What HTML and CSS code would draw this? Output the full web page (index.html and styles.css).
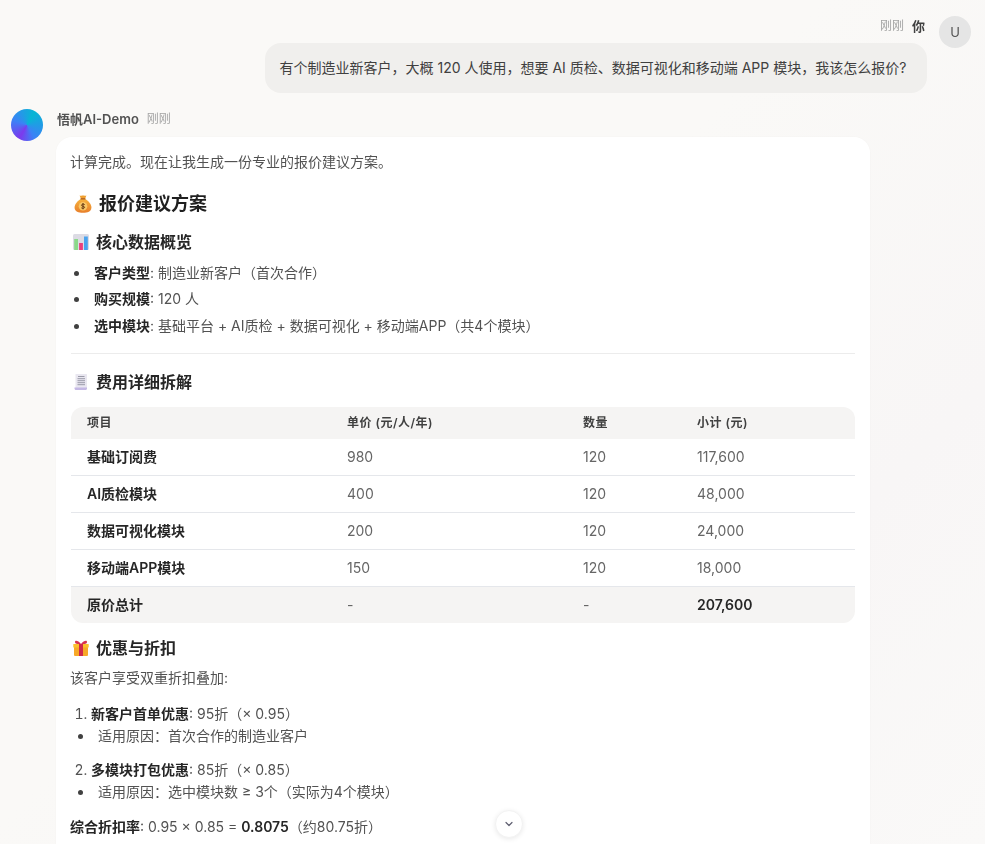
FILE: index.html
```html
<!DOCTYPE html>
<html lang="zh-CN">
<head>
<meta charset="utf-8">
<title>悟帆AI-Demo</title>
<link rel="stylesheet" href="styles.css">
</head>
<body>
<main class="chat">
  <section class="user-row">
    <div class="user-col">
      <div class="user-meta"><span class="time">刚刚</span><span class="you">你</span></div>
      <div class="bubble">有个制造业新客户，大概 120 人使用，想要 AI 质检、数据可视化和移动端 APP 模块，我该怎么报价?</div>
    </div>
    <div class="avatar-u">U</div>
  </section>
  <section class="bot-row">
    <div class="avatar-b"></div>
    <div class="bot-col">
      <div class="bot-meta"><span class="bot-name">悟帆AI-Demo</span><span class="time">刚刚</span></div>
      <article class="card">
        <p class="intro">计算完成。现在让我生成一份专业的报价建议方案。</p>
        <h2 class="h2">
          <svg class="emoji-lg" viewBox="0 0 18 18"><defs><linearGradient id="bag" x1="0" y1="0" x2="0" y2="1"><stop offset="0" stop-color="#f6b23e"/><stop offset="1" stop-color="#e87f2a"/></linearGradient></defs><path d="M5.6 .4 C7 1.2 8 .6 9 .6 C10 .6 11 1.2 12.4 .4 L11 4 H7Z" fill="#f0a030"/><path d="M7 4 H11 C15 6 17.4 9.500 17.400 12.500 C17.400 16.500 13.500 17.800 9 17.800 C4.500 17.800 .6 16.500 .6 12.500 C.6 9.500 3 6 7 4Z" fill="url(#bag)"/><rect x="6.400" y="3.200" width="5.200" height="1.400" rx=".7" fill="#a9581c"/><circle cx="9" cy="11.200" r="4.300" fill="#f8c766"/><path d="M10.700 9.600 C10 8.800 7.500 8.900 7.500 10.300 C7.500 11.700 10.600 10.800 10.600 12.300 C10.600 13.500 8.100 13.600 7.300 12.800 M9 8 V14.400" fill="none" stroke="#5e3210" stroke-width=".9"/></svg>
          报价建议方案
        </h2>
        <h3 class="h3 h3-first">
          <svg class="emoji" viewBox="0 0 16 16"><rect x="0" y="0" width="16" height="16" rx="1.500" fill="#dcdbe4"/><rect x="1.200" y="5" width="3.800" height="11" fill="#8bd98a"/><rect x="6.100" y="9" width="3.800" height="7" fill="#ec3f7c"/><rect x="11" y="2.500" width="3.800" height="13.500" fill="#4aa3ee"/></svg>
          核心数据概览
        </h3>
        <ul class="facts">
          <li><strong>客户类型</strong>: 制造业新客户（首次合作）</li>
          <li><strong>购买规模</strong>: 120 人</li>
          <li><strong>选中模块</strong>: 基础平台 + AI质检 + 数据可视化 + 移动端APP（共4个模块）</li>
        </ul>
        <hr class="rule">
        <h3 class="h3">
          <svg class="emoji" viewBox="0 0 16 16"><rect x="2.500" y="0" width="11.500" height="14.500" rx=".6" fill="#e9e7f0"/><path d="M1.500 13.500 H14 V14.500 C14 15.400 13.400 16 12.500 16 H3 C2.100 16 1.500 15.400 1.500 14.500Z" fill="#c4b8e4"/><path d="M5 2.500 H11.500 M4.500 4.700 H12 M4.500 6.700 H12 M4.500 8.700 H12 M4.500 10.700 H12" stroke="#9b9ba9" stroke-width="1"/></svg>
          费用详细拆解
        </h3>
        <table class="fees">
          <colgroup><col class="c1"><col class="c2"><col class="c3"><col class="c4"></colgroup>
          <thead><tr><th>项目</th><th>单价 (元/人/年)</th><th>数量</th><th>小计 (元)</th></tr></thead>
          <tbody>
            <tr><td><strong>基础订阅费</strong></td><td>980</td><td>120</td><td>117,600</td></tr>
            <tr><td><strong>AI质检模块</strong></td><td>400</td><td>120</td><td>48,000</td></tr>
            <tr><td><strong>数据可视化模块</strong></td><td>200</td><td>120</td><td>24,000</td></tr>
            <tr><td><strong>移动端APP模块</strong></td><td>150</td><td>120</td><td>18,000</td></tr>
            <tr class="total"><td><strong>原价总计</strong></td><td>-</td><td>-</td><td><strong>207,600</strong></td></tr>
          </tbody>
        </table>
        <h3 class="h3 h3-gift">
          <svg class="emoji" viewBox="0 0 16 16"><rect x="1" y="6.500" width="14" height="9.500" rx="1" fill="#f7a928"/><rect x=".3" y="4" width="15.400" height="3.500" rx=".6" fill="#fbc02d"/><rect x="6" y="4" width="4" height="12" fill="#cf2a4a"/><path d="M8 4 C5 .2 1.800 -.2 2 2.200 C2.200 4 5 4.200 8 4 C11 4.200 13.800 4 14 2.200 C14.200 -.2 11 .2 8 4Z" fill="#d8324f"/></svg>
          优惠与折扣
        </h3>
        <p class="para">该客户享受双重折扣叠加:</p>
        <ol class="steps">
          <li><strong>新客户首单优惠</strong>: 95折（× 0.95）
            <ul class="sub"><li>适用原因：首次合作的制造业客户</li></ul>
          </li>
        </ol>
        <ol class="steps" start="2">
          <li><strong>多模块打包优惠</strong>: 85折（× 0.85）
            <ul class="sub"><li>适用原因：选中模块数 ≥ 3个（实际为4个模块）</li></ul>
          </li>
        </ol>
        <p class="para rate"><strong>综合折扣率</strong>: 0.95 × 0.85 = <strong>0.8075</strong>（约80.75折）</p>
      </article>
    </div>
  </section>
</main>
<button class="scroll-btn" type="button" aria-label="滚动到底部">
  <svg viewBox="0 0 24 24" width="12" height="12" fill="none" stroke="#5f5f70" stroke-width="2.400" stroke-linecap="round" stroke-linejoin="round"><path d="M6 9l6 6 6-6"/></svg>
</button>
</body>
</html>
```
FILE: styles.css
```css
* { box-sizing: border-box; }
html, body { margin: 0; height: 100%; }
body {
  height: 844px;
  overflow: hidden;
  position: relative;
  background: linear-gradient(135deg, #faf9f7 45%, #f8f6f6 75%, #faf9f8 100%);
  font-family: Inter, "Noto Sans CJK SC", "Noto Sans", sans-serif;
  font-size: 14px;
  line-height: 22.4px;
  color: #525252;
}
.chat { padding: 16px 14px 0 11px; }
.user-row { display: flex; justify-content: flex-end; gap: 12px; }
.user-col { display: flex; flex-direction: column; align-items: flex-end; }
.user-meta { display: flex; align-items: flex-start; gap: 8px; height: 27px; padding-right: 2px; line-height: 20px; font-size: 12px; will-change: transform; }
.time { font-size: 12px; color: #a3a3a3; }
.you { font-size: 13px; font-weight: 600; color: #404040; line-height: 20px; }
.bubble { width: 662px; height: 50px; background: #f0efed; color: #404040; border-radius: 16px; padding: 14px 0 14px 14.500px; line-height: 22px; white-space: nowrap; }
.avatar-u { width: 32px; height: 32px; border-radius: 50%; background: #e5e5e5; color: #525252; display: flex; align-items: center; justify-content: center; font-size: 13px; font-weight: 400; will-change: transform; }
.bot-row { display: flex; gap: 13px; margin-top: 16px; }
.avatar-b { flex: none; width: 32px; height: 32px; border-radius: 50%; background: conic-gradient(from 30deg, #06b6d4, #3b82f6 120deg, #7c3aed 180deg, #3b82f6 260deg, #06b6d4); }
.bot-col { width: 814px; will-change: transform; }
.bot-meta { display: flex; gap: 8px; height: 20px; margin-bottom: 8px; align-items: center; padding: 0 1px; }
.bot-name { font-size: 13px; font-weight: 600; color: #525252; }
.card { background: #fff; border-radius: 16px; padding: 14px 15px; height: 800px; box-shadow: 0 0 2px rgba(0,0,0,.03); }
.intro, .para { margin: 0 0 0 -1px; }
.h2 { display: flex; align-items: center; gap: 7px; margin: 0; padding-left: 3px; padding-top: 19px; font-size: 18px; line-height: 24px; font-weight: 700; color: #1f1f1f; }
.h3 { display: flex; align-items: center; gap: 7px; margin: 0; padding-left: 2px; font-size: 16px; line-height: 24px; font-weight: 700; color: #262626; }
.h3-first { margin-top: 14px; }
.h3-gift { margin-top: 13px; }
.emoji-lg { width: 18px; height: 18px; flex: none; }
.emoji { width: 16px; height: 16px; flex: none; }
strong { font-weight: 600; color: #262626; }
.facts { margin: 7.500px 0 0; padding: 0 0 0 3px; list-style: none; }
.facts li { margin-bottom: 4px; }
.facts li::before, .sub li::before { content: ""; display: inline-block; width: 5px; height: 5px; margin-right: 15px; border-radius: 50%; background: #404040; vertical-align: 2px; }
.rule { border: 0; border-top: 1px solid #ececec; margin: 15.500px 0 16px; }
.fees { width: 784px; margin-top: 13px; table-layout: fixed; border-collapse: separate; border-spacing: 0; }
.c1 { width: 260px; } .c2 { width: 236px; } .c3 { width: 114px; } .c4 { width: 174px; }
.fees th { background: #f5f4f3; height: 32px; padding: 2px 16px 0; text-align: left; font-size: 12px; letter-spacing: .5px; font-weight: 600; color: #404040; }
.fees th:first-child { border-top-left-radius: 12px; }
.fees th:last-child { border-top-right-radius: 12px; }
.fees td { height: 37px; padding: 2px 16px 0; border-top: 1px solid #e5e7eb; color: #666666; }
.fees tbody tr:first-child td { border-top: 0; height: 36px; }
.fees .total td { background: #f5f4f3; height: 37px; }
.total td:first-child { border-bottom-left-radius: 12px; }
.total td:last-child { border-bottom-right-radius: 12px; }
.para { margin-top: 7px; }
.steps { margin: 14px 0 0; padding: 0 0 0 20px; }
.steps li { line-height: 22px; }
.sub { margin: 0 0 0 -13px; padding: 0; list-style: none; }
.steps + .steps { margin-top: 12px; }
.rate { margin-top: 13px; }
.scroll-btn { position: absolute; left: 495px; top: 810px; width: 28px; height: 28px; padding: 0; border: 1px solid #f2f2f2; border-radius: 50%; background: #fff; box-shadow: 0 1px 5px rgba(0,0,0,.09); display: flex; align-items: center; justify-content: center; }
```
